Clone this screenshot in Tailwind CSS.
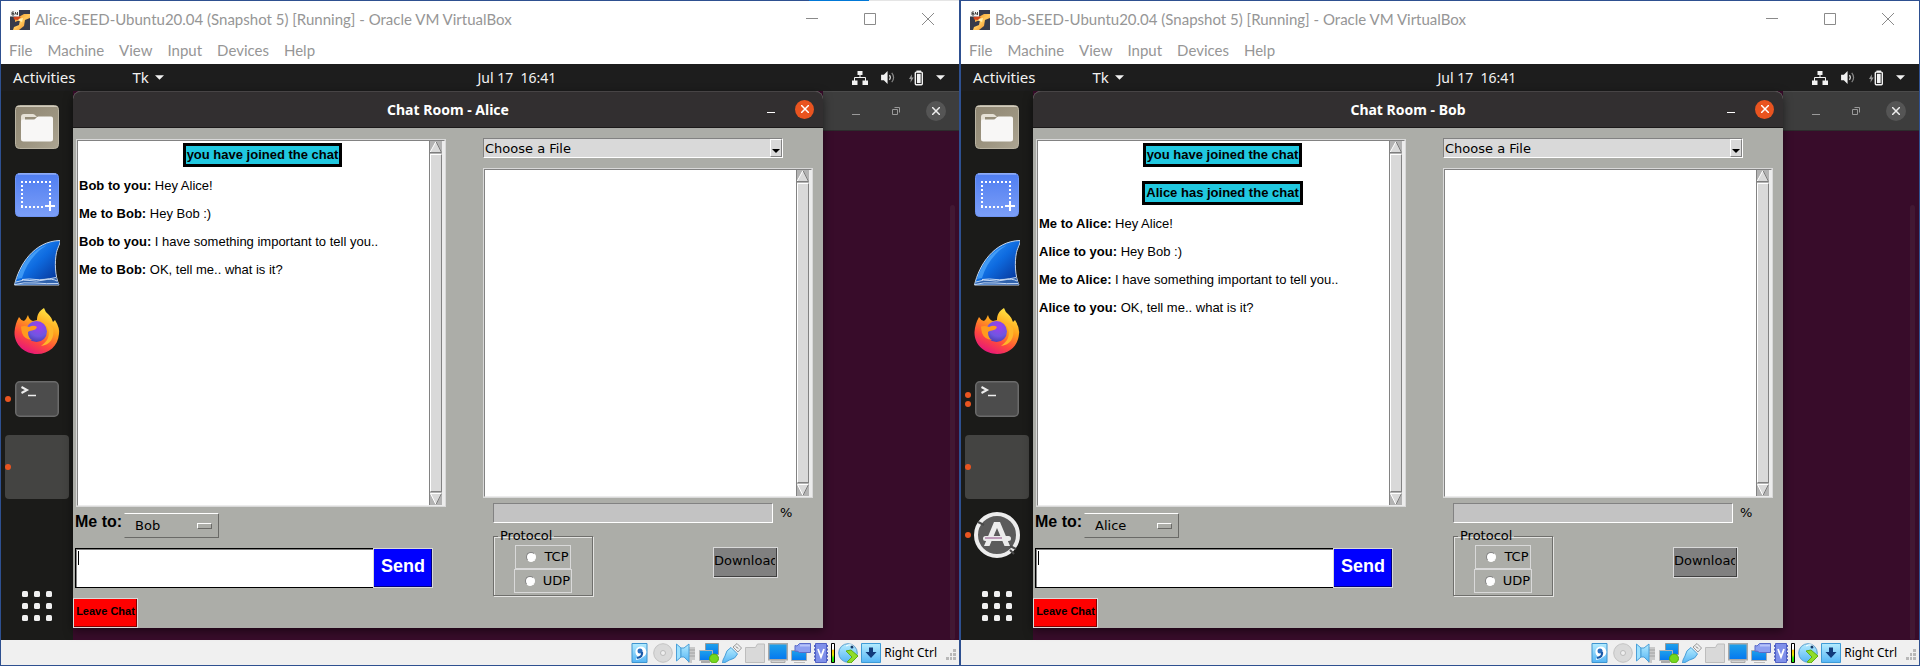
<!DOCTYPE html>
<html lang="en">
<head>
<meta charset="utf-8">
<title>Chat Room</title>
<script src="https://cdn.jsdelivr.net/npm/@tailwindcss/browser@4"></script>
</head>
<body class="bg-white">
<svg class="absolute size-0" aria-hidden="true">
  <defs>
    <linearGradient id="gFile" x1="0" y1="0" x2="1" y2="1"><stop offset="0" stop-color="#8f8672"/><stop offset=".6" stop-color="#9d9581"/><stop offset="1" stop-color="#aca592"/></linearGradient>
    <linearGradient id="gShot" x1="0" y1="0" x2="0" y2="1"><stop offset="0" stop-color="#4f7df0"/><stop offset="1" stop-color="#7c9ff8"/></linearGradient>
    <linearGradient id="gShark" x1="0" y1="0" x2="1" y2="1"><stop offset="0" stop-color="#3fa4ff"/><stop offset=".5" stop-color="#0e6be0"/><stop offset="1" stop-color="#052a8a"/></linearGradient>
    <linearGradient id="gFox" x1=".8" y1="0" x2=".3" y2="1"><stop offset="0" stop-color="#fff04a"/><stop offset=".4" stop-color="#ffa11c"/><stop offset=".7" stop-color="#ff4b3c"/><stop offset="1" stop-color="#e5127e"/></linearGradient>
    <radialGradient id="gGlobe" cx=".6" cy=".25" r=".8"><stop offset="0" stop-color="#a03cf0"/><stop offset=".6" stop-color="#6f56e0"/><stop offset="1" stop-color="#4a3bb0"/></radialGradient>
    <linearGradient id="gBlue" x1="0" y1="0" x2="0" y2="1"><stop offset="0" stop-color="#1fa2ea"/><stop offset="1" stop-color="#0478f0"/></linearGradient>
    <linearGradient id="gSky" x1="0" y1="0" x2="0" y2="1"><stop offset="0" stop-color="#b5ecff"/><stop offset="1" stop-color="#55b5f5"/></linearGradient>
    <linearGradient id="gBox" x1="0" y1="0" x2="1" y2="1"><stop offset="0" stop-color="#f08a1c"/><stop offset=".5" stop-color="#ffc95c"/><stop offset="1" stop-color="#ee7a1a"/></linearGradient>
    <linearGradient id="gLevel" x1="0" y1="0" x2="0" y2="1"><stop offset="0" stop-color="#fff"/><stop offset=".3" stop-color="#fff"/><stop offset=".35" stop-color="#ffc400"/><stop offset=".6" stop-color="#e8e800"/><stop offset=".75" stop-color="#2bf000"/><stop offset="1" stop-color="#12d400"/></linearGradient>
  </defs>
  <symbol id="vbox" viewBox="0 0 20 20"><rect width="20" height="20" fill="#363b4a"/><path d="M5 9 14 4h6v4l-5 2-1 6-5 4H3l1-3 5-2 1-5-5 2z" fill="url(#gBox)"/><path d="M6 9.500 13 8l-1 4z" fill="#fff0b0"/><path d="M3.500 7 8 6l3 1-3 3-4-.500z" fill="#d2461c"/><path d="M0 0h9v6.500H0z" fill="#f4f4f4"/><path d="M2 2h2M2 2v3h2V3.500H2M5.500 2v2h2M7.500 2v3" stroke="#444" stroke-width="1" fill="none"/></symbol>
  <symbol id="files" viewBox="0 0 44 44"><rect x=".5" y=".5" width="43" height="43" rx="4" fill="url(#gFile)" stroke="#b9b3a2"/><path d="M2 1.500h40" stroke="#d2ccbd"/><path d="M6 33V12q0-3 3-3h9q1.500 0 2.500 1.500L22 12H10v8z" fill="#e6e1d6"/><path d="M6 16.500q0-2 2-2h10.500q1.500 0 2.500-1.500t2.500-1.500H36q2 0 2 2v20.500q0 2.500-2.500 2.500h-27Q6 36.500 6 34z" fill="#f8f7f6"/></symbol>
  <symbol id="shot" viewBox="0 0 44 44"><rect x=".5" y=".5" width="43" height="43" rx="4" fill="url(#gShot)" stroke="#6f95f5"/><path d="M3 1h38" stroke="#a9c0fb"/><path d="M6 9h30M6 34h24" stroke="#fff" stroke-width="2" stroke-dasharray="2 2"/><path d="M7 8v26M35 8v22" stroke="#fff" stroke-width="2" stroke-dasharray="2 2"/><path d="M35 28v10M30 33h10" stroke="#fff" stroke-width="2"/></symbol>
  <symbol id="shark" viewBox="0 0 46 46"><path d="M.500 45C5 25 20 1 46 .500c.500 3-2 6-3.500 12C40.500 22 41 36 45 45z" fill="url(#gShark)" stroke="#c9d6e6"/><path d="M3 39C8 24 18 10 33 5 20 13 12 25 8 38z" fill="#5cb2ff" opacity=".6"/><path d="M1 44q6-5 12-4.500T26 39q9-1.500 16-.500l3 6z" fill="#2f62ad"/><path d="M2 42q8-3 14-1.500t14-.500 13 1M1 44.500q8-2.500 20-1.500t23 .500M8 39.500q8-1 14 0t20-2" stroke="#c3d7f2" fill="none"/></symbol>
  <symbol id="fox" viewBox="0 0 46 46"><path d="M5 9q1.500 3 5 4l2-2 2-4q1 5 5 6l4-1C23 7 25 3 30 0q1 4 5 7 3 3 4 7l2-2q5 8 4 14c-1 12-10 20-22 20S0 37 .500 24Q1 16 5 9z" fill="url(#gFox)"/><circle cx="22.500" cy="23.500" r="10.500" fill="url(#gGlobe)"/><path d="M7 18.500q5-1 8 .500 5-2.500 8 0-1 3-5 3.500-3 0-4 1.500 0 6 4 8-8-1-10-7-1-4-1-6.500z" fill="#ff9a1e"/><path d="M33 32c4-7 1-14-3-17 4 0 7 2 9 5 2 10-3 17-12 18q4-3 6-6z" fill="#ffb62a"/></symbol>
  <symbol id="term" viewBox="0 0 44 36"><rect x=".75" y=".75" width="42.500" height="34.500" rx="4" fill="#4c4c4c" stroke="#6b6b6b" stroke-width="1.500"/><path d="m6.500 6 5.500 3-5.500 3" fill="none" stroke="#eee" stroke-width="2"/><path d="M13 14.500h8" stroke="#eee" stroke-width="1.500"/></symbol>
  <symbol id="upd" viewBox="0 0 46 46"><circle cx="23" cy="23" r="21" fill="#5b5b5b" stroke="#ededed" stroke-width="4"/><path d="m4 10 6 3M36 34l6 3M36 38l4 4" stroke="#4a4a4a" stroke-width="2"/><path d="M20 10h6l10 24h-5.500L23 16l-7.500 18H10z" fill="#ececec"/><rect x="9" y="24" width="28" height="5" rx="2.500" fill="#ececec"/><path d="M11 26h17" stroke="#8d4a86" stroke-width="1"/></symbol>
  <symbol id="apps" viewBox="0 0 30 30"><g fill="#f0f0f0"><rect width="6" height="6" rx="1.500"/><rect x="12" width="6" height="6" rx="1.500"/><rect x="24" width="6" height="6" rx="1.500"/><rect y="12" width="6" height="6" rx="1.500"/><rect x="12" y="12" width="6" height="6" rx="1.500"/><rect x="24" y="12" width="6" height="6" rx="1.500"/><rect y="24" width="6" height="6" rx="1.500"/><rect x="12" y="24" width="6" height="6" rx="1.500"/><rect x="24" y="24" width="6" height="6" rx="1.500"/></g></symbol>
  <symbol id="net" viewBox="0 0 16 14"><path d="M5.500 0h5v4h-5zM0 9.500h5.500V14H0zM10.500 9.500H16V14h-5.500z" fill="#f2f2f2"/><path d="M8 4v3M2.500 10V6.500h11V10" stroke="#f2f2f2" fill="none"/></symbol>
  <symbol id="vol" viewBox="0 0 16 14"><path d="M0 4h3l4-4v14l-4-4H0z" fill="#f2f2f2"/><path d="M9 4.500q2 2.500 0 5" stroke="#ddd" fill="none" stroke-width="1.300"/><path d="M11.500 2q4 5 0 10" stroke="#888" fill="none" stroke-width="1.300"/></symbol>
  <symbol id="bat" viewBox="0 0 15 16"><path d="M3 4 0 9h2l-.500 4L5 7.500H3z" fill="#9a9a9a"/><path d="M8 0h5v2H8z" fill="#f2f2f2"/><rect x="6.750" y="1.750" width="7.500" height="13.500" rx="1" stroke="#f2f2f2" stroke-width="1.500" fill="none"/><path d="M8.500 3.500h4v10h-4z" fill="#f2f2f2"/></symbol>
  <symbol id="tri" viewBox="0 0 10 5"><path d="M0 0h10L5 5z" fill="#f2f2f2"/></symbol>
  <symbol id="hdd" viewBox="0 0 20 20"><path d="M2 .500h15v19H2z" fill="url(#gSky)" stroke="#3f94cf"/><path d="M6 11.500a5.500 5.500 0 1 1 7 2.500q-3 3-7 3 0-2 2-3z" fill="#fff"/><circle cx="10" cy="8" r="2.500" fill="#2a70c0"/><path d="M12 9q1 5-5 6" stroke="#1b5aa8" stroke-width="2.200" fill="none"/></symbol>
  <symbol id="disc" viewBox="0 0 20 20"><circle cx="10" cy="10" r="9.300" fill="#dadada" stroke="#c2c2c2"/><circle cx="10" cy="10" r="2.500" fill="#eee" stroke="#bbb"/></symbol>
  <symbol id="aud" viewBox="0 0 20 20"><path d="M11 4h8v13h-3v3h-4z" fill="#c9c9c9"/><path d="M12 7h7M12 10h7M12 13h7" stroke="#a2a2a2"/><path d="M.500 1 5 5v9L.500 18z" fill="#9be0ff" stroke="#4b9fd8"/><path d="M5 5h3l5-4v18l-5-5H5z" fill="url(#gSky)" stroke="#4b9fd8"/></symbol>
  <symbol id="lan" viewBox="0 0 20 20"><path d="M6.500.500h13v11h-13z" fill="url(#gBlue)" stroke="#999"/><path d="M.500 7.500h13v10H.500z" fill="url(#gBlue)" stroke="#b5b5b5"/><path d="M2 19h9" stroke="#aaa" stroke-width="2"/><circle cx="15" cy="15.500" r="4.500" fill="#74d81c" stroke="#52ac12"/></symbol>
  <symbol id="usb" viewBox="0 0 20 20"><path d="m11 4 4-3.500L19.500 5 16 9z" fill="#eee" stroke="#999"/><path d="M14 3.500l2 2" stroke="#666"/><path d="M9 4.500 15.500 11q-2 5-8 6L3 19.500.500 20l.500-3L3 13q1-6 6-8.500z" fill="url(#gSky)" stroke="#4b9fd8"/></symbol>
  <symbol id="fold" viewBox="0 0 20 20"><path d="M.500 19.500v-15h10l2-3.500h7v18.500z" fill="#d9d9d9" stroke="#bdbdbd"/></symbol>
  <symbol id="disp" viewBox="0 0 20 20"><path d="M.750.750h18.500v16H.750z" fill="url(#gBlue)" stroke="#a9a9a9" stroke-width="1.500"/><path d="M3 18h14v1.500H3z" fill="#fff" stroke="#aaa"/></symbol>
  <symbol id="rec" viewBox="0 0 20 20"><path d="M.500 7.500h15v10H.500z" fill="url(#gBlue)" stroke="#aaa"/><path d="M3 19.500h11" stroke="#bbb"/><path d="M8.500.500h11v9h-11L6 8l-2 .500v-6L6 3z" fill="#8e9ff0" stroke="#5b6bc8"/><path d="M9 2.500h10" stroke="#b9c4fa" stroke-width="2"/></symbol>
  <symbol id="cpu" viewBox="0 0 14 20"><path d="M1.500.500h11v19h-11z" fill="#7f90ea" stroke="#5262c4"/><path d="M.500 2v17M13.500 2v17" stroke="#5262c4" stroke-dasharray="2 1.500"/><path d="m4 6 3 8 3-8" fill="none" stroke="#fff" stroke-width="1.800"/></symbol>
  <symbol id="lvl" viewBox="0 0 4 20"><path d="M.500.500h3v19h-3z" fill="url(#gLevel)" stroke="#000"/></symbol>
  <symbol id="mouse" viewBox="0 0 20 20"><circle cx="10" cy="10" r="9.300" fill="url(#gSky)" stroke="#5b9fcf"/><path d="M8 3q5-3 8 1" stroke="#fff" fill="none"/><circle cx="14" cy="4" r="1.500" fill="#123a6a"/><path d="m8 8 5-1 7 6-7 7-4-1 5-5z" fill="#8fdc28" stroke="#5fae14"/></symbol>
  <symbol id="key" viewBox="0 0 20 20"><path d="M.500.500h19v19H.500z" fill="url(#gSky)" stroke="#3f9bd6"/><path d="M8 4.500h4V9h3.500L10 15 4.500 9H8z" fill="#123a7a"/></symbol>
  <symbol id="grip" viewBox="0 0 10 11"><path d="M7 0h3v3H7zM4 4h2v3H4zM7 4h3v3H7zM0 8h3v3H0zM4 8h2v3H4zM7 8h3v3H7z" fill="#b8b8b8"/></symbol>
  <symbol id="up" viewBox="0 0 12 12"><path d="M6 0 12 12H0z" fill="#d9d9d9"/><path d="M0 11.500 6 .500" stroke="#fff"/><path d="M6 .500 11.500 11.500H0" stroke="#7d7d7d" fill="none"/></symbol>
  <symbol id="down" viewBox="0 0 12 12"><path d="M0 0h12L6 12z" fill="#d9d9d9"/><path d="M12 .500H.500L6 11.500" stroke="#fff" fill="none"/><path d="M11.500.500 6 11.500" stroke="#7d7d7d"/></symbol>
</svg>

<main id="desk" class="grid min-h-screen grid-cols-2"></main>

<script>
const icon = (id, cls) => `<svg class="${cls}" aria-hidden="true"><use href="#${id}"/></svg>`;

const scrollbar = () => `
  <div class="flex w-[13px] flex-none flex-col border-l border-[#828282] bg-[#b3b3b3]">
    ${icon('up', 'size-3')}
    <div class="mt-px flex-1 border border-t-white border-l-white border-r-[#828282] border-b-[#828282] bg-[#d9d9d9]"></div>
    ${icon('down', 'mt-px size-3')}
  </div>
  <div class="w-[2px] flex-none bg-[#ececec]"></div>`;

const dot = '<i class="size-[6px] rounded-full bg-[#e95420]"></i>';
const dots = n => n ? `<span class="absolute left-1 flex flex-col gap-[3px]">${dot.repeat(n)}</span>` : '';
const dockItem = (svg, n, label) => `<li class="relative flex h-[68px] items-center justify-center"><button aria-label="${label}">${svg}</button>${dots(n)}</li>`;
const radio = (v, label) => `<label class="flex h-6 items-center gap-2 border border-[#d9d9d9] pr-px pl-[10px]"><input type="radio" name="proto-${v.name}" class="size-[10px] appearance-none rounded-full border border-t-[#828282] border-r-white border-b-white border-l-[#828282] bg-white">${label}</label>`;

const vm = v => `
<section class="flex flex-col border-x border-b border-[#2e5090] bg-white">
  <div class="flex h-px">
    <i class="flex-1 bg-[#2e5090]"></i>${v.accent ? '<i class="w-[60px] bg-[#0078d7]"></i><i class="w-[90px] bg-[#e5e5e5]"></i>' : ''}
  </div>
  <header class="flex h-[37px] items-center pr-[25px] pl-[9px] font-[Lato,sans-serif] text-[15px] text-[#969696]">
    ${icon('vbox', 'size-5')}
    <h1 class="ml-[5px] flex-1">${v.name}-SEED-Ubuntu20.04 (Snapshot 5) [Running] - Oracle VM VirtualBox</h1>
    <div class="mb-px flex gap-[46px]">
      <button aria-label="Minimize"><svg class="size-3" stroke="#8a8a8a"><path d="M0 5.500h12"/></svg></button>
      <button aria-label="Maximize"><svg class="size-3" stroke="#8a8a8a" fill="none"><path d="M.500.500h11v11H.500z"/></svg></button>
      <button aria-label="Close"><svg class="size-3" stroke="#8a8a8a"><path d="m0 0 12 12M12 0 0 12"/></svg></button>
    </div>
  </header>
  <nav class="flex h-[26px] items-center gap-[15px] pb-px pl-2 font-[Lato,sans-serif] text-[15px] text-[#969696]">
    <button>File</button><button>Machine</button><button>View</button><button>Input</button><button>Devices</button><button>Help</button>
  </nav>
  <div class="flex h-[27px] items-center bg-[#1d1d1d] pr-[14px] pl-3 font-['Noto_Sans',sans-serif] text-[15px] text-[#f2f2f2]">
    <button>Activities</button>
    <button class="ml-[57px] flex items-center gap-[6px]">Tk ${icon('tri', 'h-[5px] w-[9px]')}</button>
    <time class="flex-1 pl-[18px] text-center text-[14px] whitespace-pre">Jul 17  16:41</time>
    <div class="flex items-center gap-[13px]">
      ${icon('net', 'h-[14px] w-4')}${icon('vol', 'h-[13px] w-[15px]')}${icon('bat', 'h-4 w-[14px]')}${icon('tri', 'h-[5px] w-[9px]')}
    </div>
  </div>

  <div class="flex flex-1 bg-[#380c2a]">
    <ul class="flex w-[72px] flex-none flex-col bg-[#1b1b19] pt-[2px]">
      ${dockItem(icon('files', 'size-11'), 0, 'Files')}
      ${dockItem(icon('shot', 'size-11'), 0, 'Screenshot')}
      ${dockItem(icon('shark', 'size-[46px]'), 0, 'Wireshark')}
      ${dockItem(icon('fox', 'size-[46px]'), 0, 'Firefox')}
      ${dockItem(icon('term', 'h-9 w-11'), v.terminals, 'Terminal')}
      ${dockItem('<span class="block size-16 rounded bg-[#444442]"></span>', 1, 'Tk')}
      ${v.updater ? dockItem(icon('upd', 'size-[46px]'), 1, 'Software Updater') : ''}
      <li class="mt-auto flex h-[68px] items-center justify-center"><button aria-label="Show Applications">${icon('apps', 'size-[30px]')}</button></li>
    </ul>

    <div class="z-10 mb-3 flex flex-1 flex-col rounded-t-lg bg-[#acada8] shadow-[0_3px_10px_rgba(0,0,0,0.5)]">
      <div class="flex h-[37px] items-center rounded-t-lg border-t border-b border-t-[#474445] border-b-[#1c1a1a] bg-[#322f30] pr-[9px] pl-[56px] text-white">
        <h2 class="flex-1 text-center font-['Noto_Sans',sans-serif] text-[14px] font-bold">Chat Room - ${v.name}</h2>
        <button class="mr-5 flex h-[18px] items-center" aria-label="Minimize"><svg class="h-3 w-2" stroke="#fff"><path d="M0 8.500h8"/></svg></button>
        <button class="mb-px flex size-[19px] items-center justify-center rounded-full bg-[#e95420]" aria-label="Close"><svg class="size-2" stroke="#fff" stroke-width="1.500"><path d="m0 0 8 8M8 0 0 8"/></svg></button>
      </div>
      <div class="flex flex-1 gap-[37px] pr-[10px]">

        <div class="flex flex-[373] flex-col pt-[11px]">
          <div class="ml-[3px] flex flex-1 border border-[#d9d9d9]">
            <div class="flex flex-1 border border-t-[#828282] border-r-[#ececec] border-b-[#ececec] border-l-[#828282] bg-white">
              <div class="flex-1 font-['Liberation_Sans',Arial,sans-serif] text-[13px] text-black">
                <div class="flex flex-col items-center gap-[14px] pt-[2px] pl-[18px]">
                  ${v.notices.map(n => `<p class="border-[3px] border-black bg-[#20c8e0] px-px leading-[18px] font-bold">${n}</p>`).join('')}
                </div>
                <div class="mt-[5px] pl-px leading-7">
                  ${v.messages.map(([who, text]) => `<p><b>${who}:</b> ${text}</p>`).join('')}
                </div>
              </div>
              ${scrollbar()}
            </div>
          </div>
          <div class="mt-[6px] ml-[2px] flex gap-[2px]">
            <label for="to-${v.name}" class="pt-px font-['Liberation_Sans',Arial,sans-serif] text-[16px] leading-4 font-bold text-black">Me to:</label>
            <div class="flex h-[25px] w-[95px] items-center border border-t-white border-r-[#6a6a67] border-b-[#6a6a67] border-l-[#acada8] pr-[6px]">
              <select id="to-${v.name}" class="flex-1 appearance-none bg-transparent pl-[10px] font-['DejaVu_Sans',sans-serif] text-[13px] text-black"><option>${v.peer}</option></select>
              <i class="h-[6px] w-[15px] border border-t-white border-r-[#6a6a67] border-b-[#6a6a67] border-l-white"></i>
            </div>
          </div>
          <div class="mt-[10px] mr-[13px] ml-[2px] flex h-10">
            <div class="relative flex min-w-0 flex-1">
              <textarea aria-label="Message" class="min-w-0 flex-1 resize-none border border-r-0 border-black bg-white p-[3px] font-['Liberation_Sans',Arial,sans-serif] text-[13px] leading-4 outline-none shadow-[inset_1px_1px_0_#828282]"></textarea>
              <i class="absolute top-[3px] left-[3px] h-[14px] w-px bg-black"></i>
            </div>
            <button class="w-[60px] border border-[#d9d9d9] bg-[#0000ff] pb-1 font-['Liberation_Sans',Arial,sans-serif] text-[18px] font-bold text-white shadow-[inset_-1px_-1px_0_#000080]">Send</button>
          </div>
          <button class="mt-[10px] h-[30px] w-[65px] border border-[#d9d9d9] bg-[#ff0000] pb-1 font-['Liberation_Sans',Arial,sans-serif] text-[11px] font-bold whitespace-nowrap text-black shadow-[inset_-1px_-1px_0_#800000]">Leave Chat</button>
        </div>

        <div class="flex flex-[330] flex-col pt-[10px] pb-8 font-['DejaVu_Sans',sans-serif] text-[13px] text-black">
          <div class="mr-[30px] flex h-5 border border-t-[#828282] border-r-white border-b-white border-l-[#828282] bg-[#d9d9d9]">
            <select aria-label="Choose a File" class="flex-1 appearance-none bg-transparent pt-px pl-px leading-4 outline-none"><option>Choose a File</option></select>
            <i class="flex w-3 items-end justify-center border border-t-white border-r-[#828282] border-b-[#828282] border-l-white pb-[3px]"><svg class="h-1 w-2"><path d="M0 0h8L4 4z"/></svg></i>
          </div>
          <div class="mt-[10px] flex flex-1 border border-[#d9d9d9]">
            <div class="flex flex-1 border border-t-[#828282] border-r-[#ececec] border-b-[#ececec] border-l-[#828282] bg-white">
              <div class="flex-1"></div>
              ${scrollbar()}
            </div>
          </div>
          <div class="mt-[5px] ml-[10px] flex items-center">
            <div role="progressbar" aria-label="Download progress" class="h-5 w-[280px] border border-t-[#828282] border-r-white border-b-white border-l-[#828282] bg-[#c3c3c3]"></div>
            <span class="ml-[7px] leading-5">%</span>
          </div>
          <div class="mt-1 mr-[35px] ml-[10px] flex items-start justify-between">
            <fieldset class="h-[69px] w-[100px] border border-[#6f6f6c] shadow-[inset_1px_1px_0_#e4e4e2,1px_1px_0_#e4e4e2]">
              <legend class="ml-[4px] px-[2px] leading-[18px]">Protocol</legend>
              <div class="flex flex-col items-center">${radio(v, 'TCP')}${radio(v, 'UDP')}</div>
            </fieldset>
            <button class="mt-5 h-[31px] w-[65px] border border-[#d9d9d9] bg-[#808080] pb-[3px] shadow-[inset_-1px_-1px_0_#404040]"><span class="block w-[61px] overflow-hidden text-left">Download</span></button>
          </div>
        </div>
      </div>
    </div>

    <div class="flex w-[136px] flex-none flex-col">
      <div class="flex h-10 items-center justify-end border-t border-b border-t-[#4b4b4b] border-b-[#2c2c2c] bg-[#3d3d3d] pr-[13px]">
        <button aria-label="Minimize"><svg class="mt-1 h-3 w-2" stroke="#9a9a9a"><path d="M0 7.500h8"/></svg></button>
        <button class="ml-8" aria-label="Restore"><svg class="size-2" stroke="#9a9a9a" fill="none"><path d="M.500 2.500h5v5h-5zM2.500.500h5v5"/></svg></button>
        <button class="ml-[26px] flex size-5 items-center justify-center rounded-full bg-[#555]" aria-label="Close"><svg class="size-2" stroke="#eee" stroke-width="1.500"><path d="m0 0 8 8M8 0 0 8"/></svg></button>
      </div>
      <i class="mt-[74px] mr-1 w-[5px] flex-1 self-end rounded bg-[#421833]"></i>
    </div>
  </div>

  <footer class="flex h-[25px] items-center justify-end gap-[3px] bg-[#f0f0f0] pr-[3px]">
    ${['hdd','disc','aud','lan','usb','fold','disp','rec'].map(i => icon(i, 'size-5')).join('')}
    ${icon('cpu', 'h-5 w-[14px]')}${icon('lvl', 'h-5 w-1')}${icon('mouse', 'size-5')}${icon('key', 'size-5')}
    <span class="mr-[6px] font-['Noto_Sans',sans-serif] text-[12px] text-black">Right Ctrl</span>
    ${icon('grip', 'mt-1 h-[11px] w-[10px]')}
  </footer>
</section>`;

const machines = [
  { name: 'Alice', peer: 'Bob', accent: true, terminals: 1, updater: false,
    notices: ['you have joined the chat'],
    messages: [['Bob to you', 'Hey Alice!'], ['Me to Bob', 'Hey Bob :)'], ['Bob to you', 'I have something important to tell you..'], ['Me to Bob', 'OK, tell me.. what is it?']] },
  { name: 'Bob', peer: 'Alice', accent: false, terminals: 2, updater: true,
    notices: ['you have joined the chat', 'Alice has joined the chat'],
    messages: [['Me to Alice', 'Hey Alice!'], ['Alice to you', 'Hey Bob :)'], ['Me to Alice', 'I have something important to tell you..'], ['Alice to you', 'OK, tell me.. what is it?']] }
];
document.getElementById('desk').innerHTML = machines.map(vm).join('');
</script>
</body>
</html>
